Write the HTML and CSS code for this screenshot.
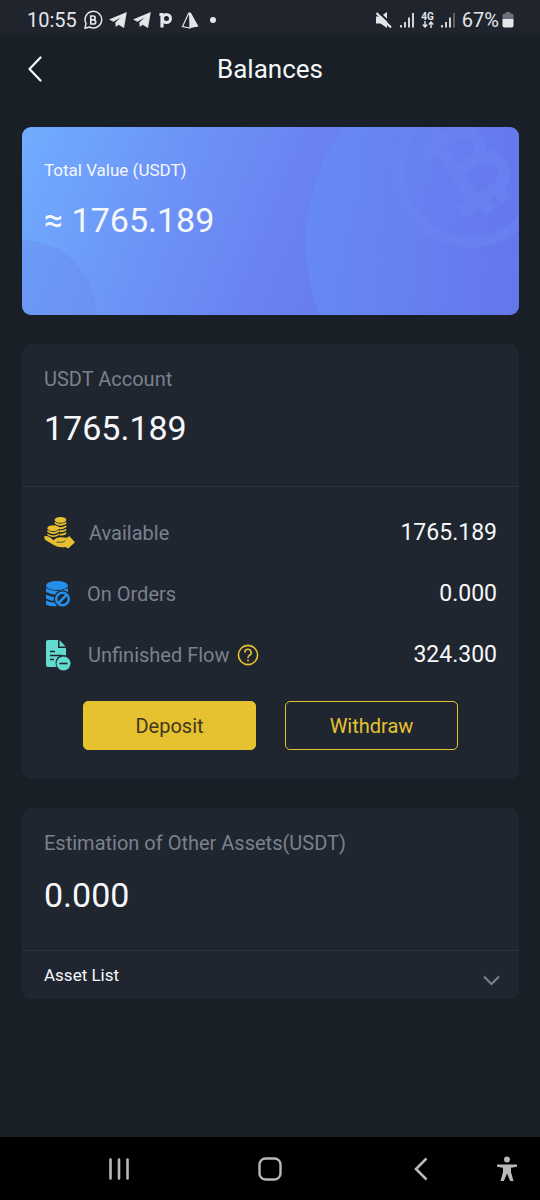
FILE: index.html
```html
<!DOCTYPE html>
<html lang="en">
<head>
<meta charset="utf-8">
<meta name="viewport" content="width=device-width, initial-scale=1">
<title>Balances</title>
<link rel="stylesheet" href="styles.css">
</head>
<body>
<div class="screen">
  <div class="status">
    <div class="status-group">
      <span class="clock">10:55</span>
      <svg width="20" height="20" viewBox="0 0 20 20" fill="none" stroke="currentColor"><path d="M2 18.200l1-4.800A8.300 8.300 0 1 1 6.600 17z" stroke-width="1.500" stroke-linejoin="round"/><path d="M7.800 6v8h2.800a2.100 2.100 0 0 0 0-4.200H7.800h2.400a1.900 1.900 0 0 0 0-3.800z" stroke-width="1.700"/></svg>
      <svg width="18" height="16" viewBox="0 0 18 16" fill="currentColor"><path d="M17.800 0 15 16 9.500 12.800 6.800 15 6.300 10.500 11.500 5.500 4.500 9.800 0 7.500z"/></svg>
      <svg width="18" height="16" viewBox="0 0 18 16" fill="currentColor"><path d="M17.800 0 15 16 9.500 12.800 6.800 15 6.300 10.500 11.500 5.500 4.500 9.800 0 7.500z"/></svg>
      <svg width="18" height="16" viewBox="0 0 18 16" fill="none" stroke="currentColor"><path d="M5 15.500V2.500H2.500" stroke-width="3.200"/><circle cx="9.500" cy="6.500" r="4" stroke-width="3"/></svg>
      <svg width="18" height="17" viewBox="0 0 18 17"><path d="M7.800 1 1.500 14.500 9 16V1z" fill="none" stroke="currentColor" stroke-width="1.200"/><path d="M8 1h2l7.500 13.500L9 16z" fill="currentColor"/></svg>
      <svg width="18" height="16" viewBox="0 0 18 16" fill="currentColor"><circle cx="8" cy="8" r="3"/></svg>
    </div>
    <div class="status-group">
      <svg width="18" height="18" viewBox="0 0 18 18"><path d="M1 5.500h4.500L12 1v16l-6.500-4.500H1z" fill="currentColor"/><path d="M3.500 1 18 15" stroke="#20242d" stroke-width="2"/><path d="M1.500 2 16 16.500" stroke="currentColor" stroke-width="2.200"/></svg>
      <svg width="16" height="16" viewBox="0 0 16 16" stroke="currentColor" stroke-width="1.800"><path d="M2 13v2.500M6 10v5.500M10 5.500v10M14 1v14.500"/></svg>
      <span class="network"><span>4G</span><svg width="12" height="7" viewBox="0 0 12 7" fill="none" stroke="currentColor" stroke-width="1.400"><path d="M3 0v6M.8 3.500 3 6l2.200-2.500M9 7V1M6.800 3.500 9 1l2.200 2.500"/></svg></span>
      <svg width="16" height="16" viewBox="0 0 16 16" stroke="currentColor" stroke-width="1.800"><path d="M2 13v2.500M6 10v5.500M10 5.500v10"/><path d="M14 1v14.500" opacity=".35"/></svg>
      <span class="charge">67%<svg width="12" height="16" viewBox="0 0 12 16" fill="currentColor"><path d="M4 0h4v1.500h1.500Q11.500 1.500 11.500 3.500V7H.500V3.500Q.5 1.500 2.500 1.500H4z" opacity=".4"/><path d="M.5 7h11v6.500q0 2-2 2h-7q-2 0-2-2z"/></svg></span>
    </div>
  </div>

  <header class="topbar">
    <button class="back" type="button" aria-label="Back"><svg width="14" height="26" viewBox="0 0 14 26" fill="none" stroke="currentColor" stroke-width="2.200" stroke-linecap="round" stroke-linejoin="round"><path d="M12.500 1.500 1.500 13l11 11.500"/></svg></button>
    <h1 class="title">Balances</h1>
  </header>

  <main class="content">
    <section class="hero">
      <svg class="hero-art" viewBox="0 0 497 188" preserveAspectRatio="xMidYMid slice" aria-hidden="true">
        <defs>
          <linearGradient id="disc" x1="0" y1="0" x2="1" y2="0"><stop offset="0" stop-color="#6490f7" stop-opacity=".6"/><stop offset="1" stop-color="#6678ec" stop-opacity="0"/></linearGradient>
        </defs>
        <circle cx="484" cy="116" r="200" fill="url(#disc)"/>
        <circle cx="0" cy="187" r="74" fill="#6a86ee" opacity=".35"/>
        <g fill="none" stroke="#6a86f3" opacity=".55">
          <circle cx="448" cy="44" r="71" stroke-width="11"/>
          <g transform="translate(447 38) rotate(-34)" stroke-width="12">
            <path d="M-34 -34H5a16 16 0 0 1 0 33H-15H9a18 18 0 0 1 0 36H-34M-15 -34V35M-9 -35V-50M9 -35V-50M-9 36V50M11 36V50"/>
          </g>
        </g>
      </svg>
      <h2 class="hero-label">Total Value (USDT)</h2>
      <p class="amount">≈ 1765.189</p>
    </section>

    <section class="card">
      <div class="summary">
        <h2 class="label">USDT Account</h2>
        <p class="amount">1765.189</p>
      </div>
      <div class="details">
        <dl class="rows">
          <div class="row">
            <dt class="label name"><svg width="31" height="34" viewBox="0 0 32 34" fill="#e6bf30"><path d="M0 20.500q3-1 6 1l4 3q3-4 8-3l6 .5 2-2 6 6.500L25 33l-3-1.500q-7 1-12-2L1 24z"/><path d="M13 26.500h5q3-.3 4-2" fill="none" stroke="#20262f" stroke-width=".8"/><ellipse cx="17" cy="3.500" rx="6" ry="3"/><path d="M11 5.500q6 4 12 0v2q-6 4-12 0zm0 3.500q6 4 12 0v2q-5 3.500-8 1.500zm5 5q3 1 7-1.500v2q-3 2-7 1.500zm0 3.500q3 1 7-1.500v2q-3 2-7 1.500z"/><ellipse cx="9.500" cy="12" rx="6" ry="3"/><path d="M3.500 14q6 4 12 0v2q-6 4-12 0zm0 3.500q6 4 12 0V19q-6 4-12 0z"/></svg>Available</dt>
            <dd class="value">1765.189</dd>
          </div>
          <div class="row">
            <dt class="label name"><svg width="29" height="28" viewBox="0 0 29 28" fill="#258eea"><ellipse cx="13" cy="5.500" rx="11" ry="4.500"/><path d="M2 8q11 6 22 0v4q-11 6-22 0zm0 6.500q6 3 11 2.500l-1 4q-6 0-10-2.500zm0 6q5 2.500 10 2l2 3.500Q2 27 2 23.500z"/><circle cx="18.500" cy="19" r="8.800" fill="#20262f"/><g fill="none" stroke="#258eea" stroke-width="2.600"><circle cx="18.500" cy="19" r="6.300"/><path d="M14 23.500l9-9"/></g></svg>On Orders</dt>
            <dd class="value">0.000</dd>
          </div>
          <div class="row">
            <dt class="label name"><svg width="30" height="32" viewBox="0 0 30 32" fill="#63dccf"><path d="M4 1h10v8h8v19H4q-2 0-2-2V3q0-2 2-2z"/><path d="M15.500 1l6 6.500h-6z"/><path d="M6 12.500h5M6 16.500h12M6 20.500h4" stroke="#20262f" stroke-width="1.600"/><circle cx="19.500" cy="24" r="8" fill="#20262f"/><circle cx="19.500" cy="24.500" r="7"/><path d="M15.500 24.500h8" stroke="#20262f" stroke-width="1.600"/></svg>Unfinished Flow<button class="help" type="button" aria-label="About unfinished flow"><svg width="22" height="22" viewBox="0 0 22 22" fill="none" stroke="currentColor" stroke-width="1.600"><circle cx="11" cy="11" r="9.600"/><path d="M7.800 8.500A3.200 3.200 0 1 1 12.500 11.300Q11 12.200 11 14M11 15.500v1.800"/></svg></button></dt>
            <dd class="value">324.300</dd>
          </div>
        </dl>
        <div class="actions">
          <button class="action primary" type="button">Deposit</button>
          <button class="action" type="button">Withdraw</button>
        </div>
      </div>
    </section>

    <section class="card">
      <div class="summary other">
        <h2 class="label">Estimation of Other Assets(USDT)</h2>
        <p class="amount">0.000</p>
      </div>
      <button class="expand" type="button"><span>Asset List</span><svg width="17" height="11" viewBox="0 0 17 11" fill="none" stroke="#7b8190" stroke-width="2"><path d="M1 1.500l7.500 7.500L16 1.500"/></svg></button>
    </section>
  </main>

  <nav class="navbar" aria-label="System">
    <button class="nav-key" type="button" aria-label="Recents"><svg width="22" height="24" viewBox="0 0 22 24" stroke="currentColor" stroke-width="2.600" stroke-linecap="round"><path d="M2.500 2.500v19M11 2.500v19M19.500 2.500v19"/></svg></button>
    <button class="nav-key" type="button" aria-label="Home"><svg width="24" height="24" viewBox="0 0 24 24" fill="none" stroke="currentColor" stroke-width="2.400"><rect x="1.500" y="1.500" width="21" height="21" rx="6"/></svg></button>
    <button class="nav-key" type="button" aria-label="Back"><svg width="14" height="24" viewBox="0 0 14 24" fill="none" stroke="currentColor" stroke-width="2.600"><path d="M12.500 1.500 2 12l10.500 10.500"/></svg></button>
    <button class="nav-key access" type="button" aria-label="Accessibility"><svg width="22" height="26" viewBox="0 0 22 26" fill="currentColor"><circle cx="11" cy="3.500" r="3"/><path d="M1 8.500h20v2.300l-6 1V16l2.500 9h-3.300L11 17.500 7.800 25H4.500L7 16v-4.200l-6-1z"/></svg></button>
  </nav>
</div>
</body>
</html>
```

FILE: styles.css
```css
* { box-sizing: border-box; }

body {
  margin: 0;
  background: #181f26;
  color: #f6f7fa;
  font-family: Roboto, "Liberation Sans", sans-serif;
}

h1, h2, p, dl, dd { margin: 0; font-weight: 400; }
button { padding: 0; border: 0; background: none; color: inherit; font: inherit; cursor: pointer; }
svg { display: block; flex: none; }

.screen { display: flex; flex-direction: column; min-height: 100vh; }

.status {
  display: flex;
  justify-content: space-between;
  align-items: center;
  height: 38px;
  padding: 2px 26px 0 27px;
  background: linear-gradient(#20242d 80%, #181f26);
  color: #e4e6ea;
  font-size: 20px;
}
.status-group { display: flex; align-items: center; gap: 6px; }
.network { display: flex; flex-direction: column; align-items: center; font-size: 10px; font-weight: 700; line-height: 9px; }
.charge { display: flex; align-items: center; gap: 3px; }

.topbar { position: relative; display: flex; justify-content: center; align-items: center; height: 62px; }
.back { position: absolute; left: 0; padding: 18px 28px; }
.title { font-size: 26px; line-height: 32px; }

.content { display: flex; flex: 1; flex-direction: column; gap: 29px; padding: 27px 21px 29px 22px; }

.hero {
  position: relative;
  overflow: hidden;
  min-height: 188px;
  padding: 32px 22px;
  border-radius: 9px;
  background: linear-gradient(112deg, #70adff 0%, #6c93f7 30%, #6981f1 55%, #6571e9 100%);
}
.hero-art { position: absolute; inset: 0; width: 100%; height: 100%; }
.hero-label { position: relative; font-size: 17px; line-height: 22px; }
.amount { font-size: 34px; line-height: 42px; }
.hero .amount { position: relative; margin-top: 18px; }

.card { border-radius: 9px; background: #20262f; }
.summary { display: grid; gap: 16px; padding: 23px 22px 37px; border-bottom: 1px solid #2d343d; }
.other { gap: 19px; padding-bottom: 34px; }
.label { color: #7b808e; font-size: 20px; line-height: 24px; }

.details { padding: 26px 22px 29px; }
.rows { display: grid; gap: 21px; }
.row { display: flex; justify-content: space-between; align-items: center; height: 40px; }
.name { display: flex; align-items: center; gap: 14px; }
.value { font-size: 23px; line-height: 28px; }
.help { margin-left: -7px; color: #e6c230; }

.actions { display: flex; gap: 29px; margin-top: 26px; padding: 0 39px; }
.action {
  flex: 1;
  height: 49px;
  border: 1px solid #e6c230;
  border-radius: 5px;
  color: #e6c230;
  font-size: 20px;
}
.primary { background: #e6c230; color: #40371e; }

.expand {
  display: flex;
  justify-content: space-between;
  align-items: flex-end;
  width: 100%;
  padding: 13px 19px 13px 22px;
  font-size: 17px;
  line-height: 22px;
}

.navbar { display: grid; grid-template-columns: 44px 1fr 1fr 1fr 44px; align-items: center; height: 63px; background: #000; color: #b9b9b9; }
.nav-key { display: flex; justify-content: center; align-items: center; height: 48px; }
.nav-key:first-child { grid-column: 2; }
.access { justify-content: flex-start; }
```
